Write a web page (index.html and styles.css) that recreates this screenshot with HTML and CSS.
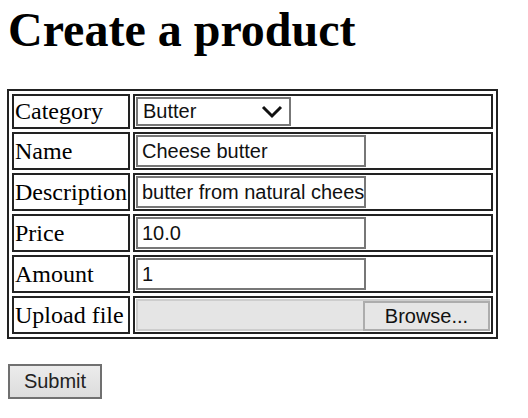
FILE: index.html
```html
<!DOCTYPE html>
<html>
<head>
<meta charset="utf-8">
<title>Create a product</title>
<link rel="stylesheet" href="styles.css">
</head>
<body>
<h1 class="title">Create a product</h1>
<form class="form">
  <table class="grid">
    <tr>
      <td class="label">Category</td>
      <td class="field">
        <div class="select">
          <span class="select-text">Butter</span>
          <svg class="chev" width="22" height="14" viewBox="0 0 22 14"><path d="M2 2 L11 11 L20 2" fill="none" stroke="#111" stroke-width="3"/></svg>
        </div>
      </td>
    </tr>
    <tr>
      <td class="label">Name</td>
      <td class="field"><div class="input">Cheese butter</div></td>
    </tr>
    <tr>
      <td class="label">Description</td>
      <td class="field"><div class="input">butter from natural chees</div></td>
    </tr>
    <tr>
      <td class="label">Price</td>
      <td class="field"><div class="input">10.0</div></td>
    </tr>
    <tr>
      <td class="label">Amount</td>
      <td class="field"><div class="input">1</div></td>
    </tr>
    <tr>
      <td class="label">Upload file</td>
      <td class="field">
        <div class="file">
          <span class="file-name"></span>
          <span class="browse">Browse...</span>
        </div>
      </td>
    </tr>
  </table>
  <div class="submit">Submit</div>
</form>
</body>
</html>
```

FILE: styles.css
```css
html, body {
  margin: 0;
  padding: 0;
  background: #fff;
}
body {
  padding: 2px 7px 0 7px;
  font-family: "Liberation Serif", "Times New Roman", serif;
  color: #000;
}
.title {
  margin: 0 0 32px 1px;
  font-size: 48px;
  line-height: 55px;
  font-weight: bold;
}
.form {
  margin: 0;
}
.grid {
  border: 2px solid #222;
  border-spacing: 3px;
  border-collapse: separate;
}
.grid td {
  border: 2px solid #222;
  padding: 1px;
  vertical-align: middle;
}
.label {
  font-size: 24px;
  line-height: 27px;
  white-space: nowrap;
}
.field {
  width: 354px;
}
.input, .select, .file, .submit {
  font-family: "Liberation Sans", Arial, sans-serif;
  font-size: 20px;
  color: #111;
  box-sizing: border-box;
}
.input {
  width: 230px;
  height: 32px;
  border: 2px solid #777;
  padding: 0 4px;
  line-height: 28px;
  white-space: nowrap;
  overflow: hidden;
}
.select {
  width: 155px;
  height: 29px;
  border: 2px solid #777;
  padding: 0 6px 0 5px;
  display: flex;
  align-items: center;
  justify-content: space-between;
  line-height: 25px;
}
.chev {
  display: block;
}
.file {
  width: 354px;
  height: 32px;
  border: 2px solid #cdcdcd;
  background: #e5e5e5;
  display: flex;
  justify-content: flex-end;
}
.browse {
  width: 127px;
  box-sizing: border-box;
  border: 2px solid #adadad;
  margin: 0 -2px -2px 0;
  text-align: center;
  line-height: 26px;
  background: #e6e6e6;
  height: 30px;
}
.submit {
  margin: 25px 0 0 1px;
  width: 94px;
  height: 35px;
  border: 2px solid #707070;
  background: linear-gradient(#ececec, #dcdcdc);
  text-align: center;
  line-height: 31px;
  color: #222;
}
```
